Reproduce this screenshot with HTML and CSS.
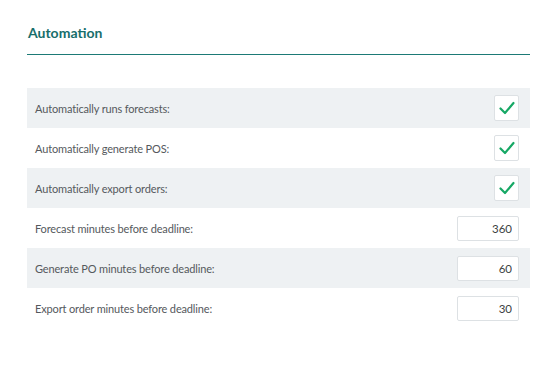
FILE: index.html
```html
<!DOCTYPE html>
<html lang="en">
<head>
  <meta charset="UTF-8" />
  <title>Automation</title>
  <link rel="stylesheet" href="styles.css">
</head>
<body>
  <div class="panel">
    <h2 class="title">Automation</h2>
    <div class="settings">
      <div class="row shaded">
        <span class="label">Automatically runs forecasts:</span>
        <span class="check">
          <svg width="16" height="14" viewBox="0 0 16 14"><path d="M1.5 7.5 L6 12 L14.5 2" fill="none" stroke="#16a865" stroke-width="2.2" stroke-linecap="round" stroke-linejoin="round"/></svg>
        </span>
      </div>
      <div class="row">
        <span class="label">Automatically generate POS:</span>
        <span class="check">
          <svg width="16" height="14" viewBox="0 0 16 14"><path d="M1.5 7.5 L6 12 L14.5 2" fill="none" stroke="#16a865" stroke-width="2.2" stroke-linecap="round" stroke-linejoin="round"/></svg>
        </span>
      </div>
      <div class="row shaded">
        <span class="label">Automatically export orders:</span>
        <span class="check">
          <svg width="16" height="14" viewBox="0 0 16 14"><path d="M1.5 7.5 L6 12 L14.5 2" fill="none" stroke="#16a865" stroke-width="2.2" stroke-linecap="round" stroke-linejoin="round"/></svg>
        </span>
      </div>
      <div class="row">
        <span class="label">Forecast minutes before deadline:</span>
        <input class="num" type="text" value="360" />
      </div>
      <div class="row shaded">
        <span class="label">Generate PO minutes before deadline:</span>
        <input class="num" type="text" value="60" />
      </div>
      <div class="row">
        <span class="label">Export order minutes before deadline:</span>
        <input class="num" type="text" value="30" />
      </div>
    </div>
  </div>
</body>
</html>
```

FILE: styles.css
```css
body {
  margin: 0;
  background: #ffffff;
  font-family: 'Lato', sans-serif;
  color: #555a5e;
}

.panel {
  padding: 24px 28px 0 27px;
}

.title {
  margin: 0;
  padding: 0 0 13px 1px;
  font-size: 14px;
  font-weight: 700;
  color: #176e6b;
  border-bottom: 1px solid #1d7a76;
}

.settings {
  margin-top: 33px;
}

.row {
  height: 40px;
  display: flex;
  align-items: center;
  justify-content: space-between;
  padding: 0 11px 0 8px;
}

.row.shaded {
  background-color: #eef1f3;
}

.label {
  font-size: 11px;
  letter-spacing: -0.15px;
  color: #55595d;
}

.check {
  width: 23px;
  height: 24px;
  background: #ffffff;
  border: 1px solid #dde1e4;
  border-radius: 2px;
  display: flex;
  align-items: center;
  justify-content: center;
}

.num {
  box-sizing: border-box;
  width: 62px;
  height: 25px;
  padding: 0 6px;
  border: 1px solid #dde1e4;
  border-radius: 2px;
  text-align: right;
  font-family: 'Lato', sans-serif;
  font-size: 11.5px;
  color: #3b3f42;
  background: #ffffff;
  outline: none;
}
```
